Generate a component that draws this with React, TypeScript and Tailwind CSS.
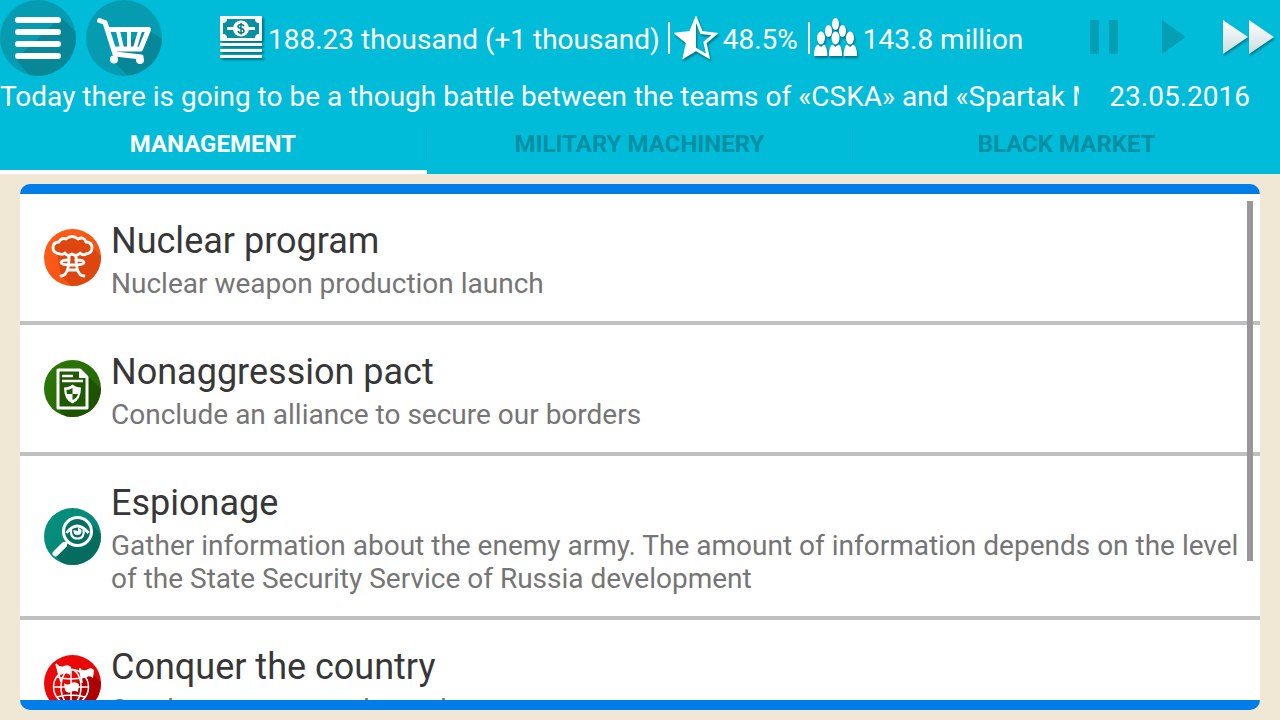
import type { ReactNode } from "react";

const tabs = ["Management", "Military machinery", "Black market"];

function MenuIcon() {
  return (
    <svg className="size-19" viewBox="0 0 76 76" aria-hidden="true">
      <defs>
        <clipPath id="menu-disc">
          <circle cx="38" cy="38" r="38" />
        </clipPath>
      </defs>
      <circle cx="38" cy="38" r="38" fill="#059cb1" />
      <path d="M16 59 61 17 90 46V90H42Z" fill="#078798" clipPath="url(#menu-disc)" />
      <path d="M18 20H58M18 32H58M18 44H58M18 56H58" stroke="#fff" strokeWidth="6" strokeLinecap="round" />
    </svg>
  );
}

function CartIcon() {
  return (
    <svg className="size-19" viewBox="0 0 76 76" aria-hidden="true">
      <defs>
        <clipPath id="cart-disc">
          <circle cx="38" cy="38" r="38" />
        </clipPath>
      </defs>
      <circle cx="38" cy="38" r="38" fill="#059cb1" />
      <path d="M27 61 30 50 62 30 90 48V90H56Z" fill="#078798" clipPath="url(#cart-disc)" />
      <g fill="none" stroke="#fff" strokeLinecap="round" strokeLinejoin="round">
        <path d="M13.5 20.5 19 22.500 29 54 55 57" strokeWidth="5" />
        <path d="M23 29.500H62.500L54.500 49H29" strokeWidth="5" />
        <path d="M32 31 36 48M43 31V48M54 31 49 48" strokeWidth="4" />
      </g>
      <circle cx="28" cy="59.500" r="4" fill="#fff" />
      <circle cx="54" cy="60" r="4" fill="#fff" />
    </svg>
  );
}

function MoneyIcon() {
  return (
    <svg className="h-11 w-[42px] drop-shadow-[2px_2px_1px_#0006]" viewBox="0 0 42 44" aria-hidden="true">
      <path d="M0 0H42V25H0ZM0 27H42V30H0ZM0 33H42V36H0ZM0 39H42V42H0Z" fill="#fff" />
      <path d="M7 3H35Q35 7 39 7V18Q35 18 35 22H7Q7 18 3 18V7Q7 7 7 3Z" fill="#078fa3" />
      <path d="M7 12.5H35" stroke="#fff" strokeWidth="3" />
      <circle cx="21" cy="12.5" r="8" fill="#fff" />
      <path
        d="M24 10Q23 8.5 21 8.5 18 8.5 18 10.5 18 12 21 12.5 24 13 24 15 24 17 21 17 18.5 17 18 15M21 7V18.5"
        fill="none"
        stroke="#06788a"
        strokeWidth="1.5"
      />
    </svg>
  );
}

function StarIcon() {
  return (
    <svg className="h-11 w-[45px] drop-shadow-[1px_2px_1px_#0006]" viewBox="0 0 45 44" aria-hidden="true">
      <path
        d="M22 3 27.5 16.500 41 18 31 26.500 34 40.500 22 33.500 10.500 40.500 13.500 26.500 3 18 16.500 16.500Z"
        fill="none"
        stroke="#fff"
        strokeWidth="3"
      />
      <path d="M22 2V34L10 41 13 27 2 17 17 16Z" fill="#fff" />
    </svg>
  );
}

function PeopleIcon() {
  return (
    <svg className="h-11 w-[43px] drop-shadow-[1px_2px_1px_#0006]" viewBox="0 0 43 44" fill="#fff" aria-hidden="true">
      <ellipse cx="21.5" cy="8" rx="3.5" ry="6" />
      <ellipse cx="14.5" cy="15" rx="3.5" ry="6" />
      <ellipse cx="28.5" cy="15" rx="3.5" ry="6" />
      <ellipse cx="7" cy="22" rx="4" ry="6.5" />
      <ellipse cx="21.5" cy="22" rx="4" ry="6.5" />
      <ellipse cx="36" cy="22" rx="4" ry="6.5" />
      <path d="M0 40Q0 30 4 28.5L7 31 10 28.5Q13 30 13.5 40ZM15 40Q15 30 18.500 28.5L21.500 31 24.500 28.5Q28 30 28 40ZM29.500 40Q30 30 33 28.5L36 31 39 28.5Q43 30 43 40Z" />
    </svg>
  );
}

type BadgeProps = { id: string; from: string; to: string; shadow: string; shade: string; children: ReactNode };

// Round row icon with a long shadow falling to the bottom right
function Badge({ id, from, to, shadow, shade, children }: BadgeProps) {
  return (
    <svg className="size-[57px] shrink-0" viewBox="0 0 57 57" aria-hidden="true">
      <defs>
        <linearGradient id={`${id}-fill`} x1="0" y1="0" x2="1" y2="1">
          <stop offset="0" stopColor={from} />
          <stop offset="1" stopColor={to} />
        </linearGradient>
        <clipPath id={`${id}-disc`}>
          <circle cx="28.5" cy="28.5" r="28.5" />
        </clipPath>
      </defs>
      <circle cx="28.5" cy="28.5" r="28.5" fill={`url(#${id}-fill)`} />
      <path d={shadow} fill={shade} clipPath={`url(#${id}-disc)`} />
      {children}
    </svg>
  );
}

function NuclearIcon() {
  return (
    <Badge id="nuclear" from="#ff5d1b" to="#f2500f" shade="#dd460e" shadow="M13 24 47 17 60 30V60H30L17 47Z">
      <g fill="none" stroke="#fff" strokeWidth="2.8" strokeLinecap="round" strokeLinejoin="round">
        <path
          d="M16 25Q9 24 9 19 9 13 15 13 17 8 22 10 28 5 34 10 40 7 42 13 48 13 48 19 48 24 42 25 39 27 36 24 33 28 28 25 23 28 21 24 19 26 16 25Z"
          fill="#dd460e"
        />
        <path d="M25 27Q25 38 23 42 21 47 17 47M32 27Q32 38 34 42 36 47 40 47" />
        <path d="M25 31Q17 31 17 33.5 17 36 28.5 36 40 36 40 33.5 40 31 32 31M24 41H33" />
      </g>
    </Badge>
  );
}

function PactIcon() {
  return (
    <Badge id="pact" from="#2c7a08" to="#236204" shade="#1c5200" shadow="M14 49 44 16 60 32V60H25Z">
      <path d="M14 10H36L43 17V48H14Z" fill="#1f5a02" stroke="#fff" strokeWidth="3" strokeLinejoin="round" />
      <path d="M35 9V18H44Z" fill="#fff" />
      <path d="M18 16H29M18 21H39" stroke="#fff" strokeWidth="2.5" />
      <path d="M28.5 24.5Q32 27.5 37 27.5 37 40 28.5 43.5 20 40 20 27.5 25 27.5 28.5 24.5Z" fill="#fff" />
      <path d="M28.5 28V34H23Q22.5 32 22.5 30 26 30 28.5 28ZM28.5 34H34Q33 38 28.5 40Z" fill="#1f5a02" />
    </Badge>
  );
}

function EspionageIcon() {
  return (
    <Badge id="espionage" from="#06917f" to="#058171" shade="#046d60" shadow="M10 47 44 13 60 29V60H24Z">
      <circle cx="33.5" cy="23.5" r="14" fill="#056f62" stroke="#fff" strokeWidth="3" />
      <path d="M23.5 33.5 20 37" stroke="#fff" strokeWidth="3" />
      <path d="M20 37 11.5 45.5" stroke="#fff" strokeWidth="6" strokeLinecap="round" />
      <path d="M22.5 25Q33 11 44.5 25" fill="none" stroke="#fff" strokeWidth="2.8" />
      <path d="M27 21Q26 30.5 33.5 30.5 41 30.5 39.5 21" fill="none" stroke="#fff" strokeWidth="2.2" />
      <path d="M29.5 22Q29 27 33.5 27 38 27 37.5 22L34 19.5 34 23Z" fill="#fff" />
    </Badge>
  );
}

function ConquerIcon() {
  return (
    <Badge id="conquer" from="#f20a0a" to="#d90505" shade="#ae0202" shadow="M13 44 46 16 60 30V60H26Z">
      <g fill="none" stroke="#fff" strokeWidth="1.5">
        <circle cx="27" cy="32" r="17.5" />
        <ellipse cx="27" cy="32" rx="10" ry="17.5" />
        <path d="M27 15V49M9.5 32H44.5M13 22Q27 26 41 22M13 42Q27 38 41 42" />
        <path d="M12 9 17 27M36 13 38 28" />
      </g>
      <path
        d="M12 8Q16 13 20 11 24 9 27 12L26 20Q22 17 19 19 16 21 14 18ZM35 13Q40 17 44 14 47 12 50 15L49 23Q46 20 43 22 39 24 36 21ZM20 28Q24 31 27 28 31 26 35 29L34 37Q30 35 27 37 23 39 21 35Z"
        fill="#fff"
      />
    </Badge>
  );
}

const actions = [
  { title: "Nuclear program", text: "Nuclear weapon production launch", icon: <NuclearIcon /> },
  { title: "Nonaggression pact", text: "Conclude an alliance to secure our borders", icon: <PactIcon /> },
  {
    title: "Espionage",
    text: "Gather information about the enemy army. The amount of information depends on the level of the State Security Service of Russia development",
    icon: <EspionageIcon />,
  },
  { title: "Conquer the country", text: "Send troops to attack another", icon: <ConquerIcon /> },
];

export default function App() {
  return (
    <div className="flex h-screen flex-col overflow-hidden bg-[#f0e8d5] font-[Roboto,sans-serif]">
      <header className="shrink-0 bg-[#00bcd8] text-[28px] text-white">
        <div className="flex h-19 items-center">
          <div className="flex shrink-0 gap-[10px]">
            <button type="button" aria-label="Menu">
              <MenuIcon />
            </button>
            <button type="button" aria-label="Shop">
              <CartIcon />
            </button>
          </div>
          <div className="ml-[58px] flex items-center whitespace-nowrap">
            <MoneyIcon />
            <span className="ml-[6px] pt-1">188.23 thousand (+1 thousand)</span>
            <span className="mr-1 ml-2 h-8 w-[2px] bg-white" />
            <StarIcon />
            <span className="ml-1 pt-1">48.5%</span>
            <span className="mr-1 ml-[10px] h-8 w-[2px] bg-white" />
            <PeopleIcon />
            <span className="ml-[6px] pt-1">143.8 million</span>
          </div>
          <div className="ml-auto flex items-center pr-[6px]">
            <button type="button" aria-label="Pause">
              <svg className="h-9 w-7" viewBox="0 0 28 36" fill="#059fb5" aria-hidden="true">
                <path d="M0 0H9V34H0ZM19 0H28V34H19Z" />
              </svg>
            </button>
            <button type="button" aria-label="Play" className="ml-11">
              <svg className="h-9 w-6" viewBox="0 0 24 36" fill="#059fb5" aria-hidden="true">
                <path d="M0 0 24 17 0 34Z" />
              </svg>
            </button>
            <button type="button" aria-label="Fast forward" className="ml-[37px]">
              <svg className="h-9 w-[51px] drop-shadow-[1px_2px_1px_#0005]" viewBox="0 0 51 36" aria-hidden="true">
                <defs>
                  <linearGradient id="forward-fill" x1="0" y1="0" x2="0" y2="1">
                    <stop offset="0" stopColor="#fff" />
                    <stop offset="1" stopColor="#cbdcde" />
                  </linearGradient>
                </defs>
                <path d="M0 0 25 17 0 34ZM26 0 51 17 26 34Z" fill="url(#forward-fill)" />
              </svg>
            </button>
          </div>
        </div>
        <div className="flex h-[42px] items-center whitespace-nowrap">
          <p className="min-w-0 flex-1 overflow-hidden">
            Today there is going to be a though battle between the teams of «CSKA» and «Spartak M
          </p>
          <time dateTime="2016-05-23" className="mr-[30px] ml-[30px]">
            23.05.2016
          </time>
        </div>
        <nav className="grid h-14 grid-cols-3 text-2xl font-bold">
          {tabs.map((tab, index) => (
            <button
              key={tab}
              type="button"
              className={`flex items-center border-b-4 uppercase ${index === 0 ? "border-white text-white" : "border-transparent text-[#078fa3]"}`}
            >
              <span className={`flex-1 ${index < 2 ? "border-r border-[#04adc6]" : ""}`}>{tab}</span>
            </button>
          ))}
        </nav>
      </header>

      <main className="flex min-h-0 flex-1 px-5 py-[10px]">
        <section className="relative min-w-0 flex-1 overflow-hidden rounded-[10px] border-y-10 border-[#007de8] bg-white">
          <ul>
            {actions.map((action) => (
              <li key={action.title} className="flex items-center border-b-4 border-[#c0c0c2] pr-5 pl-6">
                {action.icon}
                <div className="ml-[10px] pt-[25px] pb-[21px]">
                  <h2 className="text-4xl leading-[44px] text-[#373737]">{action.title}</h2>
                  <p className="mt-1 text-[28px] leading-[33px] text-[#757575]">{action.text}</p>
                </div>
              </li>
            ))}
          </ul>
          <div className="absolute top-[7px] right-[7px] h-[360px] w-[6px] bg-[#98989a]" />
        </section>
      </main>
    </div>
  );
}
